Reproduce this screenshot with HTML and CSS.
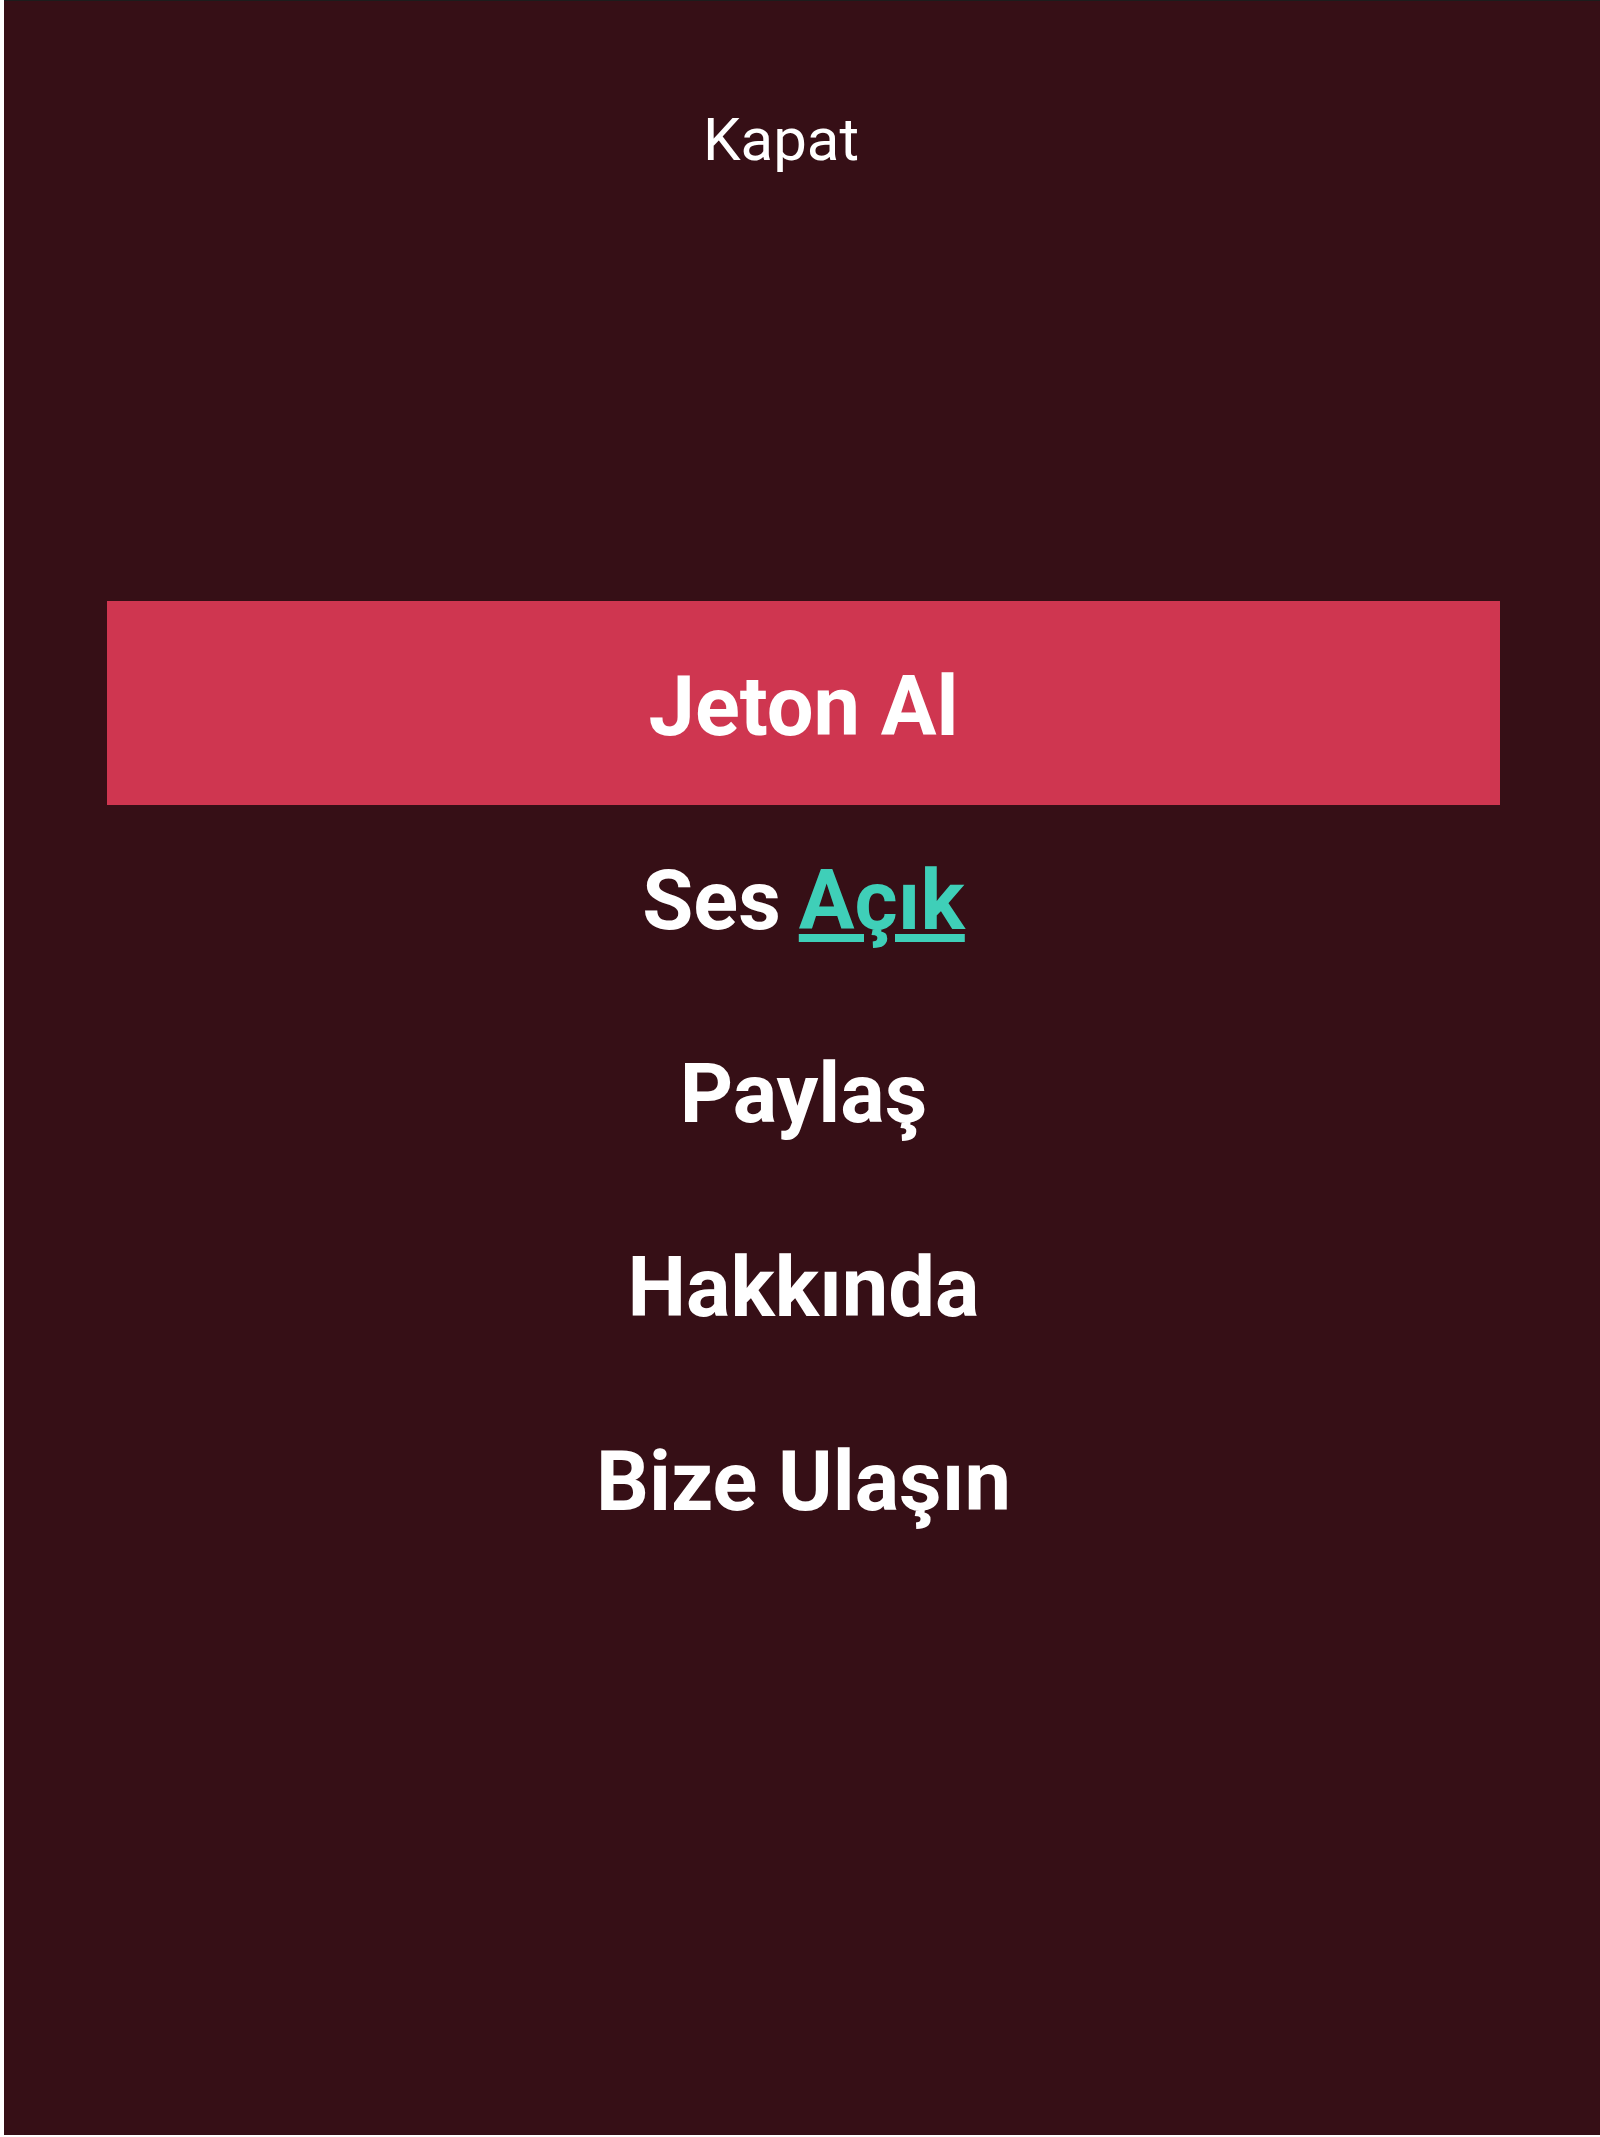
FILE: index.html
```html
<!DOCTYPE html>
<html lang="tr">
<head>
<meta charset="utf-8">
<title>Menü</title>
<link rel="stylesheet" href="styles.css">
</head>
<body>
<div class="page">
  <header class="top">
    <a class="close" href="#">Kapat</a>
  </header>
  <nav class="menu">
    <a class="item item-primary" href="#">Jeton Al</a>
    <a class="item item-first" href="#">Ses <span class="state">Açık</span></a>
    <a class="item" href="#">Paylaş</a>
    <a class="item" href="#">Hakkında</a>
    <a class="item" href="#">Bize Ulaşın</a>
  </nav>
</div>
</body>
</html>
```
FILE: styles.css
```css
html {
  background: #ffffff;
}
body {
  margin: 0 0 1px 4px;
  font-family: Roboto, "Noto Sans", "Liberation Sans", sans-serif;
}
.page {
  background: #360f16;
  border-top: 1px solid #1c1c1c;
  min-height: 2135px;
  box-sizing: border-box;
  display: flex;
  flex-direction: column;
}
.top {
  display: flex;
  justify-content: center;
  padding: 103px 42px 0 0;
  height: 600px;
  box-sizing: border-box;
}
.close {
  color: #ffffff;
  text-decoration: none;
  font-size: 60px;
  font-weight: 400;
  line-height: 1.2;
  align-self: flex-start;
}
.menu {
  display: flex;
  flex-direction: column;
  padding: 0 100px 0 103px;
}
.item {
  display: flex;
  align-items: center;
  justify-content: center;
  box-sizing: border-box;
  height: 194px;
  padding-top: 10px;
  color: #ffffff;
  text-decoration: none;
  font-size: 83px;
  font-weight: 700;
  line-height: 1;
}
.item-primary {
  background: #cf3650;
  height: 204px;
  padding-top: 6px;
}
.item-first {
  height: 186px;
  padding-top: 4px;
}
.state {
  color: #3fcfb8;
  margin-left: 18px;
  text-decoration: underline;
  text-decoration-thickness: 8px;
  text-underline-offset: 5px;
}
```
